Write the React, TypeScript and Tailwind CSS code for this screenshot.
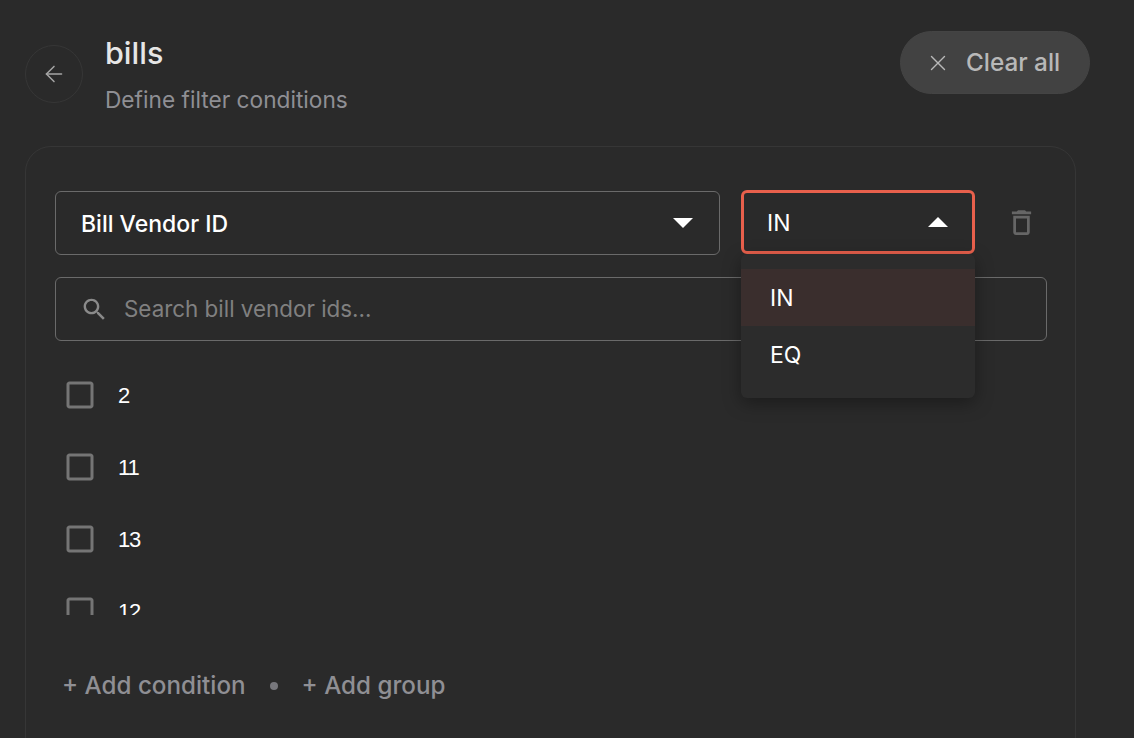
import { ArrowLeft, X } from "lucide-react";

const sans = "font-['Inter',sans-serif]";

function Caret({ up }: { up?: boolean }) {
  return (
    <svg width="20" height="10" viewBox="0 0 20 10" className="shrink-0 fill-white">
      <path d={up ? "M0 10 10 0l10 10z" : "M0 0l10 10L20 0z"} />
    </svg>
  );
}

function CheckRow({ label }: { label: string }) {
  return (
    <div className="flex h-[72px] shrink-0 items-center">
      <svg viewBox="0 0 24 24" className="ml-[7px] h-9 w-9 shrink-0 fill-[#757575]">
        <path d="M19 5v14H5V5h14m0-2H5c-1.1 0-2 .9-2 2v14c0 1.1.9 2 2 2h14c1.1 0 2-.9 2-2V5c0-1.1-.9-2-2-2z" />
      </svg>
      <span className="ml-[20px] font-['Liberation_Sans',sans-serif] text-[22px] tracking-[-1.2px] text-white">{label}</span>
    </div>
  );
}

export default function App() {
  return (
    <div className={`h-[738px] w-[1134px] overflow-hidden bg-[#2a2a2a] pl-[25px] ${sans}`}>
      <div className="flex h-[146px] items-start">
        <button className="mt-[45px] flex h-[58px] w-[58px] items-center justify-center rounded-full border border-[#363636] text-[#a5a5a5]">
          <ArrowLeft size={26} strokeWidth={1.4} />
        </button>
        <div className="ml-[22px] mt-[33px]">
          <div className="text-[30.5px] font-medium leading-[40px] text-[#e6e6e6]">bills</div>
          <div className="mt-[14px] text-[22.7px] leading-[26px] text-[#8f8f94]">Define filter conditions</div>
        </div>
        <button className="ml-auto mr-[44px] mt-[31px] flex h-[63px] w-[190px] items-center rounded-full border border-[#444] bg-[#424242] pl-[24px] text-[24.3px] font-medium text-[#b8b8b8]">
          <X size={26} strokeWidth={1.3} />
          <span className="ml-[15px]">Clear all</span>
        </button>
      </div>

      <div className="relative h-[640px] w-[1051px] rounded-[26px] border border-[#363636] pl-[29px] pt-[44px]">
        <div className="flex items-start">
          <div className="flex h-[64px] w-[665px] items-center justify-between rounded-[6px] border border-[#6a6a6a] pl-[25px] pr-[26px] text-[23px] font-medium text-white">
            <span className="pt-[2px]">Bill Vendor ID</span>
            <Caret />
          </div>
          <div className="ml-[21px] flex h-[64px] w-[234px] -translate-y-px items-center justify-between rounded-[6px] border-[3px] border-[#e8604c] pl-[23px] pr-[24px] text-[23px] text-white">
            <span className="pt-[2px]">IN</span>
            <Caret up />
          </div>
          <svg viewBox="0 0 24 24" className="ml-[30px] mt-[15px] h-[33px] w-[33px] fill-[#666]">
            <path d="M6 19c0 1.1.9 2 2 2h8c1.1 0 2-.9 2-2V7H6v12zM8 9h8v10H8V9zm7.5-5l-1-1h-5l-1 1H5v2h14V4z" />
          </svg>
        </div>

        <div className="mt-[22px] flex h-[64px] w-[992px] items-center rounded-[6px] border border-[#6a6a6a] pl-[24px] text-[22.4px] text-[#808080]">
          <svg viewBox="0 0 24 24" className="h-[29px] w-[29px] shrink-0 fill-[#8a8a8a]">
            <path d="M15.5 14h-.79l-.28-.27C15.41 12.59 16 11.11 16 9.5 16 5.91 13.09 3 9.5 3S3 5.91 3 9.5 5.91 16 9.5 16c1.61 0 3.09-.59 4.23-1.57l.27.28v.79l5 4.99L20.49 19l-4.99-5zm-6 0C7.01 14 5 11.99 5 9.5S7.01 5 9.5 5 14 7.01 14 9.5 11.99 14 9.5 14z" />
          </svg>
          <span className="ml-[15px]">Search bill vendor ids...</span>
        </div>

        <div className="mt-[18px] flex h-[256px] flex-col overflow-hidden">
          <CheckRow label="2" />
          <CheckRow label="11" />
          <CheckRow label="13" />
          <CheckRow label="12" />
        </div>

        <div className="mt-[51px] flex items-center pl-[7px] text-[24.2px] font-medium leading-[40px] text-[#8f8f94]">
          <span>+ Add condition</span>
          <span className="mx-[24px] h-2 w-2 rounded-full bg-[#77777c]" />
          <span>+ Add group</span>
        </div>

        <div className="absolute left-[715px] top-[107px] h-[144px] w-[234px] rounded-[6px] bg-[#2c2c2c] py-[15px] text-[23px] text-white shadow-[0_5px_18px_rgba(0,0,0,0.35)]">
          <div className="flex h-[57px] items-center bg-[#3a2e2d] pl-[29px] pt-[2px]">IN</div>
          <div className="flex h-[57px] items-center pl-[29px] pt-[2px]">EQ</div>
        </div>
      </div>
    </div>
  );
}
